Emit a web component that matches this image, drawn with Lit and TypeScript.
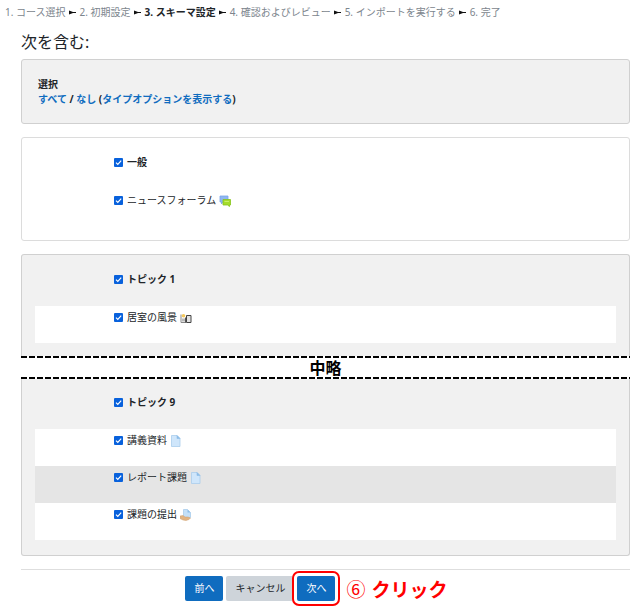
import { LitElement, html, css, svg } from "lit";
import { customElement } from "lit/decorators.js";

interface Item {
  name: string;
  icon: "forum" | "gallery" | "file" | "assign";
  shaded?: boolean;
}

const steps = ["1. コース選択", "2. 初期設定", "3. スキーマ設定", "4. 確認およびレビュー", "5. インポートを実行する", "6. 完了"];

const icons = {
  forum: svg`<path d="M1 1h8v6h-5l-1.500 2v-2h-1.500z" fill="#8fb6f0" stroke="#7aa5e8" stroke-width=".8"/><path d="M4 4.500h7.500v5.500h-1v1.500l-2-1.500h-4.500z" fill="#a5dc2c" stroke="#86c41c" stroke-width=".8"/><path d="M5.500 6.500h4.500" stroke="#c8f06a"/>`,
  gallery: svg`<path d="M1 10.500v-8M1 10.500h5" stroke="#888" fill="none"/><path d="M2 6.500h4v3h-4z" fill="#bbb"/><circle cx="3.500" cy="3.800" r="1.800" fill="#f5c95c"/><path d="M6.500 3.500h4.500v7h-4.500z" fill="#e4e4e4" stroke="#444"/><path d="M5.500 5.500v5" stroke="#555"/>`,
  file: svg`<path d="M1.500 .5h5.500l3 3v8h-8.500z" fill="#cfe6fb" stroke="#a9cdec" stroke-width=".8"/><path d="M7 .5v3h3z" fill="#8dbde8" stroke="#8dbde8" stroke-width=".6"/>`,
  assign: svg`<path d="M3.500 .5h4l3 3v5h-7z" fill="#c4e0f8" stroke="#a9cdec" stroke-width=".8"/><path d="M7.500 .5v3h3z" fill="#8dbde8"/><path d="M0 7l3-.5 2 1.500h3l2.500 1-1.500 1.500-3 1-3-.5-3-1.500z" fill="#e2b482" stroke="#cf9f6c" stroke-width=".5"/>`,
};

@customElement("app-root")
export class AppRoot extends LitElement {
  static styles = css`
    :host {
      display: block;
      box-sizing: border-box;
      padding: 5px 5px 7px;
      background: #fff;
      color: #212529;
      font: 10px/15px "Noto Sans", "Noto Sans CJK JP", sans-serif;
    }
    * { box-sizing: border-box; }
    a { color: #0f6cbf; text-decoration: none; }
    .steps {
      display: flex;
      flex-wrap: wrap;
      gap: 3px;
      align-items: center;
      margin: 0;
      padding: 0;
      list-style: none;
      color: #7c858d;
    }
    .step { display: flex; align-items: center; gap: 4px; }
    .current { color: #212529; font-weight: bold; }
    .arrow { width: 7px; height: 5px; }
    .content { margin-left: 16px; }
    .title { margin: 10px 0 5px; font-size: 16px; line-height: 24px; font-weight: normal; }
    .panel {
      margin-bottom: 13px;
      padding: 0 13px 14px;
      border: 1px solid #d0d0d0;
      border-radius: 3px;
      background: #f1f1f1;
    }
    .select { padding: 17px 16px 16px; font-weight: bold; }
    .plain { background: #fff; border-color: #dcdcdc; }
    .cut-below { margin-bottom: 0; border-bottom: 0; border-radius: 3px 3px 0 0; padding-bottom: 13px; }
    .cut-above { border-top: 0; border-radius: 0 0 3px 3px; padding-bottom: 15px; }
    .head { height: 51px; padding: 17px 0 0 79px; font-weight: bold; }
    .cut-above .head { height: 50px; padding-top: 16px; }
    .items { margin: 0; padding: 0; list-style: none; }
    .item { height: 37px; padding: 4px 0 0 79px; background: #fff; }
    .plain .items .item { background: none; }
    .items .shaded { background: #e5e5e5; }
    .option { display: inline-flex; align-items: center; gap: 4px; }
    .check {
      appearance: none;
      width: 9px;
      height: 9px;
      margin: 0;
      border-radius: 1px;
      background: #0861dc url("data:image/svg+xml,%3Csvg xmlns='http://www.w3.org/2000/svg' viewBox='0 0 9 9'%3E%3Cpath d='M2 4.600l1.800 1.800L7.200 2.700' fill='none' stroke='white' stroke-width='1.200'/%3E%3C/svg%3E");
    }
    .check:not(:checked) { background: #fff; border: 1px solid #888; }
    .named { display: flex; align-items: center; gap: 3px; }
    .icon { width: 12px; height: 12px; }
    .omitted {
      height: 23px;
      color: #000;
      font: bold 16px/23px "Noto Sans CJK JP", sans-serif;
      text-align: center;
      background:
        repeating-linear-gradient(90deg, #000 0 6px, transparent 6px 8px) top / 100% 2px no-repeat,
        repeating-linear-gradient(90deg, #000 0 6px, transparent 6px 8px) bottom / 100% 2px no-repeat;
    }
    .actions {
      display: flex;
      align-items: center;
      justify-content: center;
      gap: 3px;
      border-top: 1px solid #dedede;
      padding: 6px 18px 0 0;
    }
    .button {
      height: 25px;
      padding: 0 9px;
      border: 0;
      border-radius: 2px;
      background: #0f6cbf;
      color: #fff;
      font: inherit;
    }
    .cancel { background: #ced4da; color: #212529; }
    .ringed { outline: 2px solid #f00; outline-offset: 3px; }
    .note {
      display: flex;
      align-items: center;
      gap: 6px;
      margin-left: 8px;
      color: #f00;
      font: bold 19px/25px "Noto Sans CJK JP", sans-serif;
    }
    .number { font-weight: normal; }
  `;

  private option(name: string, icon?: Item["icon"]) {
    return html`<label class="option">
      <input class="check" type="checkbox" checked />
      <span class="named">${name}${icon ? html`<svg class="icon" viewBox="0 0 12 12" aria-hidden="true">${icons[icon]}</svg>` : ""}</span>
    </label>`;
  }

  private section(name: string, kind: string, items: Item[]) {
    return html`<section class="panel ${kind}">
      <div class="head">${this.option(name)}</div>
      <ul class="items">
        ${items.map((i) => html`<li class="item ${i.shaded ? "shaded" : ""}">${this.option(i.name, i.icon)}</li>`)}
      </ul>
    </section>`;
  }

  render() {
    return html`
      <ol class="steps">
        ${steps.map((s, i) => html`<li class="step">
          ${i ? html`<svg class="arrow" viewBox="0 0 7 5" aria-hidden="true"><path d="M0 .5L4 2H7V3H4L0 4.500z" fill="#111" /></svg>` : ""}
          <span class=${i === 2 ? "current" : ""}>${s}</span>
        </li>`)}
      </ol>
      <main class="content">
        <h2 class="title">次を含む:</h2>
        <section class="panel select">
          <div>選択</div>
          <div><a href="#all">すべて</a> / <a href="#none">なし</a> (<a href="#types">タイプオプションを表示する</a>)</div>
        </section>
        ${this.section("一般", "plain", [{ name: "ニュースフォーラム", icon: "forum" }])}
        ${this.section("トピック 1", "cut-below", [{ name: "居室の風景", icon: "gallery" }])}
        <div class="omitted">中略</div>
        ${this.section("トピック 9", "cut-above", [
          { name: "講義資料", icon: "file" },
          { name: "レポート課題", icon: "file", shaded: true },
          { name: "課題の提出", icon: "assign" },
        ])}
        <div class="actions">
          <button class="button">前へ</button>
          <button class="button cancel">キャンセル</button>
          <button class="button ringed">次へ</button>
          <span class="note"><span class="number">⑥</span>クリック</span>
        </div>
      </main>
    `;
  }
}
